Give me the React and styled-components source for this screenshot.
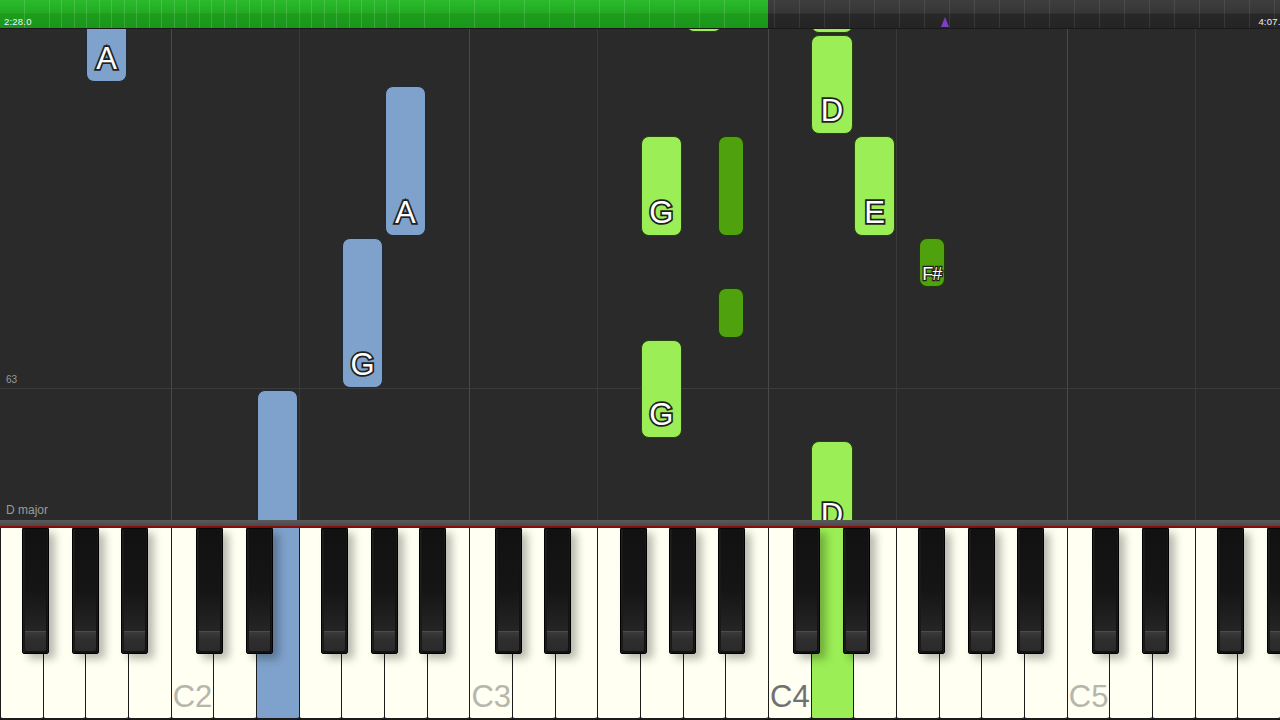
import React from "react";
import styled, { createGlobalStyle } from "styled-components";

const W = 1280 / 30;
const SEQ = ["F", "G", "A", "B", "C", "D", "E"];
const SHARP_OFFSET = { C: -4, D: 3, F: -7, G: 0, A: 6 };
const ROLL_TOP = 29;

const GlobalStyle = createGlobalStyle`
  html, body {
    margin: 0;
    padding: 0;
    background: #2a2a2a;
    overflow: hidden;
  }
  * {
    box-sizing: border-box;
  }
`;

const Screen = styled.div`
  width: 1280px;
  height: 720px;
  display: flex;
  flex-direction: column;
  background: #2a2a2a;
  font-family: "Liberation Sans", Arial, sans-serif;
  overflow: hidden;
`;

/* ---------- top progress bar ---------- */

const TopBar = styled.div`
  position: relative;
  height: 29px;
  flex: none;
  display: flex;
  background:
    repeating-linear-gradient(
      to right,
      transparent 0,
      transparent 11.5px,
      rgba(255, 255, 255, 0.08) 11.5px,
      rgba(255, 255, 255, 0.08) 12.5px
    ),
    linear-gradient(to bottom, #3e3e3e 0, #363636 13px, #282828 14px, #242424 100%);
  border-bottom: 1px solid #1a1a1a;
`;

const Progress = styled.div`
  height: 100%;
  flex: none;
  background:
    repeating-linear-gradient(
      to right,
      transparent 0,
      transparent 11.5px,
      rgba(255, 255, 255, 0.14) 11.5px,
      rgba(255, 255, 255, 0.14) 12.5px
    ),
    linear-gradient(to bottom, #2bbb2b 0, #22aa22 13px, #1c9c1c 14px, #1a961a 100%);
`;

const TimeLabel = styled.span`
  position: absolute;
  top: 16px;
  ${(p) => (p.$right ? "right: -6px;" : "left: 4px;")}
  font-size: 9.5px;
  color: #f2f2f2;
  letter-spacing: 0.2px;
`;

const Marker = styled.div`
  position: absolute;
  left: 941px;
  top: 17px;
  width: 0;
  height: 0;
  border-left: 4.5px solid transparent;
  border-right: 4.5px solid transparent;
  border-bottom: 10px solid #7d3fc4;
`;

/* ---------- note roll ---------- */

const Roll = styled.div`
  position: relative;
  flex: 1;
  display: flex;
  overflow: hidden;
  background: #2a2a2a;
`;

const Lane = styled.div`
  flex: 1;
  border-left: 1px solid
    ${(p) => (p.$line === "C" ? "#4a4a4a" : p.$line === "F" ? "#393939" : "transparent")};
`;

const HLine = styled.div`
  position: absolute;
  left: 0;
  right: 0;
  top: ${(p) => p.$top}px;
  height: 1px;
  background: #3b3b3b;
`;

const RollText = styled.span`
  position: absolute;
  left: 6px;
  top: ${(p) => p.$top}px;
  font-size: ${(p) => p.$size}px;
  color: #9a9a9a;
`;

const COLORS = {
  blue: { bg: "#7ea2cc", border: "#1f2a36" },
  green: { bg: "#9bee55", border: "#27420f" },
  dark: { bg: "#4fa20e", border: "#1e3a08" },
};

const Note = styled.div`
  position: absolute;
  border-radius: 8px;
  border: 1px solid ${(p) => COLORS[p.$color].border};
  background: ${(p) => COLORS[p.$color].bg};
  display: flex;
  align-items: flex-end;
  justify-content: center;
`;

const NoteLabel = styled.span`
  color: #ffffff;
  font-family: "Liberation Sans", Arial, sans-serif;
  font-size: ${(p) => (p.$small ? 18 : 31)}px;
  line-height: 1;
  margin-bottom: ${(p) => (p.$small ? 3 : 7)}px;
  letter-spacing: ${(p) => (p.$small ? -1 : 0)}px;
  -webkit-text-stroke: ${(p) => (p.$small ? 2.5 : 3.5)}px #1f1f1f;
  paint-order: stroke fill;
`;

/* ---------- keyboard ---------- */

const Divider = styled.div`
  height: 6px;
  flex: none;
  background: linear-gradient(to bottom, #5a5a5a, #4a4a4a);
`;

const RedLine = styled.div`
  height: 2px;
  flex: none;
  background: #8a0c0c;
`;

const Keyboard = styled.div`
  position: relative;
  height: 192px;
  flex: none;
  display: flex;
  background: #111;
`;

const WhiteKey = styled.div`
  flex: 1;
  display: flex;
  align-items: flex-end;
  justify-content: center;
  padding-bottom: 6px;
  background: ${(p) =>
    p.$hit === "blue" ? "#7ea2cc" : p.$hit === "green" ? "#9bee55" : "#fffff2"};
  border-left: 1.5px solid #1c1c1c;
  border-bottom: 2px solid #1c1c1c;
  border-radius: 0 0 3px 3px;
`;

const KeyName = styled.span`
  font-size: 31px;
  line-height: 1;
  color: ${(p) => (p.$dark ? "#707070" : "#b6b6ad")};
`;

const BlackKey = styled.div`
  position: absolute;
  top: 0;
  width: 27px;
  height: 126px;
  padding: 0 2px 2px;
  border: 1px solid #000;
  border-radius: 0 0 2px 2px;
  background: linear-gradient(to right, #202020 0, #121212 3px, #121212 24px, #202020 100%);
  box-shadow: 6px 5px 9px rgba(0, 0, 0, 0.28);
  display: flex;
  flex-direction: column;
`;

const BlackBody = styled.div`
  flex: 1;
  background: linear-gradient(to bottom, #111 0, #151515 60%, #252525 100%);
`;

const BlackLip = styled.div`
  height: 20px;
  background: linear-gradient(to bottom, #3a3a3a 0, #2e2e2e 40%, #2a2a2a 100%);
  border-top: 1px solid #4c4c4c;
  border-radius: 0 0 2px 2px;
`;

const whiteKeys = Array.from({ length: 30 }, (_, i) => {
  const letter = SEQ[i % 7];
  const octave = 1 + Math.floor((i + 3) / 7);
  return { i, letter, octave };
});

const blackKeys = whiteKeys
  .filter((k) => SHARP_OFFSET[k.letter] !== undefined)
  .map((k) => ({ i: k.i, left: (k.i + 1) * W + SHARP_OFFSET[k.letter] - 13.5 }));

const hits = { 6: "blue", 19: "green" };

const wx = (i) => i * W + 0.5;
const bx = (i, letter) => (i + 1) * W + SHARP_OFFSET[letter] - 13;

const notes = [
  { x: wx(2), w: W - 1, y1: -20, y2: 82, c: "blue", t: "A" },
  { x: wx(9), w: W - 1, y1: 86, y2: 236, c: "blue", t: "A" },
  { x: wx(8), w: W - 1, y1: 238, y2: 388, c: "blue", t: "G" },
  { x: wx(6), w: W - 1, y1: 390, y2: 620, c: "blue" },
  { x: wx(16) + 3, w: W - 7, y1: -40, y2: 32, c: "green" },
  { x: wx(19), w: W - 1, y1: -40, y2: 33, c: "green" },
  { x: wx(19), w: W - 1, y1: 35, y2: 134, c: "green", t: "D" },
  { x: wx(15), w: W - 1, y1: 136, y2: 236, c: "green", t: "G" },
  { x: bx(16, "A"), w: 26, y1: 136, y2: 236, c: "dark" },
  { x: wx(20), w: W - 1, y1: 136, y2: 236, c: "green", t: "E" },
  { x: bx(21, "F"), w: 26, y1: 238, y2: 287, c: "dark", t: "F#", small: true },
  { x: bx(16, "A"), w: 26, y1: 288, y2: 338, c: "dark" },
  { x: wx(15), w: W - 1, y1: 340, y2: 438, c: "green", t: "G" },
  { x: wx(19), w: W - 1, y1: 441, y2: 538, c: "green", t: "D" },
];

export default function App() {
  return (
    <Screen>
      <GlobalStyle />
      <TopBar>
        <Progress style={{ width: 768 }} />
        <TimeLabel>2:28.0</TimeLabel>
        <TimeLabel $right>4:07.2</TimeLabel>
        <Marker />
      </TopBar>

      <Roll>
        {whiteKeys.map((k) => (
          <Lane
            key={k.i}
            $line={k.i === 0 ? null : k.letter === "C" || k.letter === "F" ? k.letter : null}
          />
        ))}
        <HLine $top={388 - ROLL_TOP} />
        <RollText $top={374 - ROLL_TOP} $size={10}>63</RollText>
        <RollText $top={503 - ROLL_TOP} $size={12}>D major</RollText>
        {notes.map((n, idx) => (
          <Note
            key={idx}
            $color={n.c}
            style={{
              left: n.x,
              width: n.w,
              top: n.y1 - ROLL_TOP,
              height: n.y2 - n.y1,
            }}
          >
            {n.t && <NoteLabel $small={n.small}>{n.t}</NoteLabel>}
          </Note>
        ))}
      </Roll>

      <Divider />
      <RedLine />

      <Keyboard>
        {whiteKeys.map((k) => (
          <WhiteKey key={k.i} $hit={hits[k.i]}>
            {k.letter === "C" && (
              <KeyName $dark={k.octave === 4}>C{k.octave}</KeyName>
            )}
          </WhiteKey>
        ))}
        {blackKeys.map((b) => (
          <BlackKey key={b.i} style={{ left: b.left }}>
            <BlackBody />
            <BlackLip />
          </BlackKey>
        ))}
      </Keyboard>
    </Screen>
  );
}
